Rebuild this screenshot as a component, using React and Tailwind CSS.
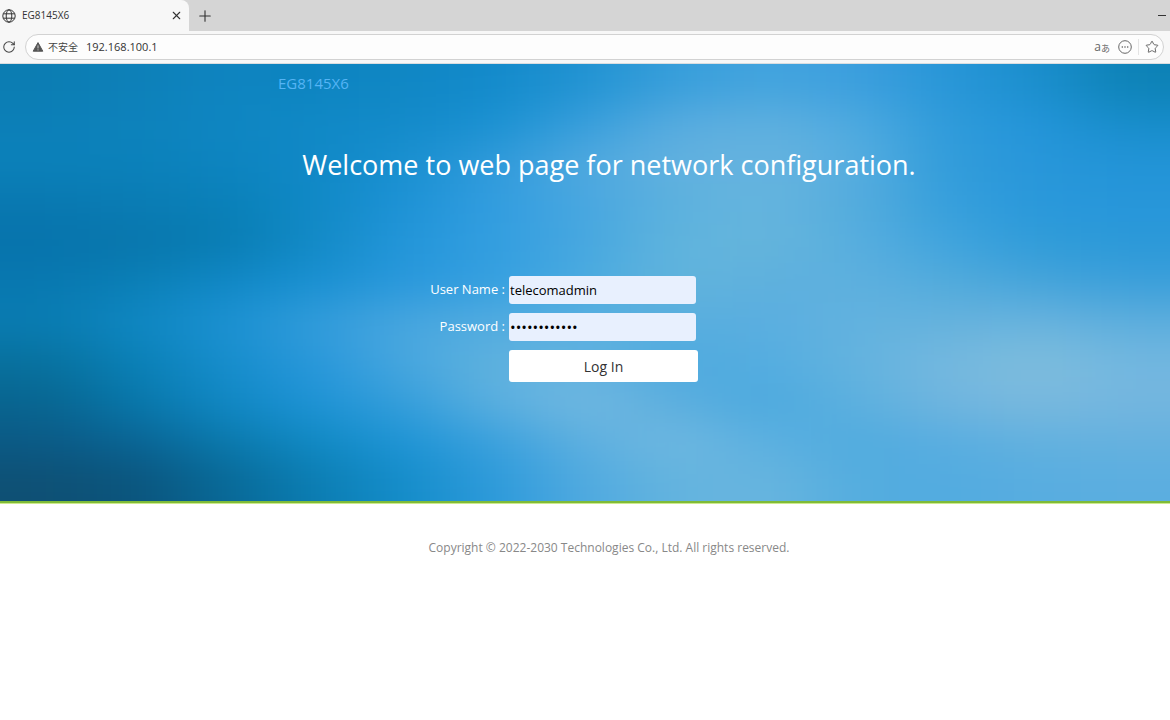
import React from "react";
import { Plus, RotateCw, Star, X } from "lucide-react";

// Colour field of the banner, one row per horizontal band
const BANNER = [
  ["#0c7db2", "#0d80b8", "#0e84c0", "#0d84c0", "#1087c4", "#138acb", "#2193d2", "#379edb", "#43a4de", "#3c9fde", "#2896d8", "#1b8fce", "#0d82b6"],
  ["#0c7fb8", "#0d82bc", "#0e86c2", "#1089c6", "#138aca", "#1a91d2", "#379edc", "#58ace0", "#60b0df", "#4eaae0", "#2f9bda", "#2395da", "#178dcb"],
  ["#0b81ba", "#0b81ba", "#0d84c0", "#1088c6", "#1990d0", "#309adb", "#50a9df", "#62b1df", "#66b3df", "#58aee0", "#319cda", "#2896da", "#2294d7"],
  ["#0978b0", "#0a7cb4", "#0980b8", "#1089c6", "#1d92d6", "#329de0", "#48a7e0", "#5cb1de", "#66b5de", "#54acdd", "#369fdc", "#2998da", "#2796da"],
  ["#0773ac", "#0876ac", "#087cb2", "#128ac6", "#2396da", "#339ee0", "#46a7e0", "#60b4dd", "#65b5dc", "#58aede", "#40a4dd", "#309cd9", "#2b99d9"],
  ["#0878b0", "#0a7fb6", "#1088c6", "#1990d2", "#2998dc", "#349fe0", "#4aabe0", "#62b4dc", "#5eb0dd", "#5eb0df", "#52abdc", "#46a4da", "#3b9fda"],
  ["#097cb2", "#0f87c2", "#1b91d2", "#329cdb", "#48a6df", "#52ace0", "#5aafe0", "#58aede", "#5aaee0", "#62b2df", "#65b2dd", "#69b3de", "#5daedd"],
  ["#08719e", "#0980b6", "#168dcc", "#2897db", "#48a7df", "#60b2de", "#62b2e0", "#4eaade", "#54ade0", "#63b3df", "#74b8df", "#7fbedc", "#72b7e0"],
  ["#086590", "#0877aa", "#1088c4", "#1e93d6", "#359edb", "#5cb0e0", "#72b8e0", "#5baedf", "#4ba9df", "#5cb0df", "#70b5df", "#7ab9de", "#74b6df"],
  ["#0b5a86", "#0a6494", "#0a79ac", "#108ac4", "#1e94d6", "#3aa0dd", "#5eb0e0", "#70b8e0", "#5bb0e0", "#50abdf", "#58ade0", "#62b1df", "#65b1df"],
  ["#0e5074", "#0b547c", "#086896", "#0b7db2", "#148dca", "#2d9adb", "#50aae0", "#64b4df", "#68b5df", "#54addf", "#52abe0", "#58ade0", "#5baee0"],
];

const CELL_W = 90;
const CELL_H = 40;

function BannerArt() {
  const lastCol = BANNER[0].length - 1;
  const lastRow = BANNER.length - 1;

  return (
    <svg
      className="absolute inset-0 h-full w-full"
      viewBox="0 0 1170 440"
      preserveAspectRatio="none"
      aria-hidden="true"
    >
      <defs>
        <filter id="soften" filterUnits="userSpaceOnUse" x="-200" y="-200" width="1570" height="840" colorInterpolationFilters="sRGB">
          <feGaussianBlur stdDeviation="40 20" />
        </filter>
      </defs>
      <g filter="url(#soften)" shapeRendering="crispEdges">
        {BANNER.map((row, r) =>
          row.map((fill, c) => {
            // edge cells run past the frame so the blur doesn't fade out there
            const left = c === 0 ? 200 : 0;
            const right = c === lastCol ? 200 : 0;
            const top = r === 0 ? 200 : 0;
            const bottom = r === lastRow ? 200 : 0;
            return (
              <rect
                key={`${r}-${c}`}
                x={c * CELL_W - left}
                y={r * CELL_H - top}
                width={CELL_W + left + right}
                height={CELL_H + top + bottom}
                fill={fill}
              />
            );
          })
        )}
      </g>
    </svg>
  );
}

function GlobeIcon() {
  return (
    <svg width="14" height="14" viewBox="0 0 14 14" fill="none" stroke="currentColor" aria-hidden="true">
      <circle cx="7" cy="7" r="6.2" />
      <ellipse cx="7" cy="7" rx="2.8" ry="6.2" />
      <path d="M1.3 4.8h11.4M1.3 9.2h11.4" />
    </svg>
  );
}

function TabStrip() {
  return (
    <div className="flex h-[31px] items-stretch bg-[#d5d5d5] text-[#333]">
      <div className="flex w-[189px] items-center rounded-tr-lg bg-[#f7f7f7] pl-0.5 pr-1">
        <GlobeIcon />
        <span className="ml-1.5 flex-1 text-[10px]">EG8145X6</span>
        <button type="button" aria-label="Close tab" className="p-0.5">
          <X size={13} strokeWidth={2} />
        </button>
      </div>
      <button type="button" aria-label="New tab" className="px-[7px]">
        <Plus size={18} strokeWidth={1.5} />
      </button>
      <button type="button" aria-label="Minimize" className="ml-auto flex items-center px-1">
        <span className="h-px w-2 bg-[#333]" />
      </button>
    </div>
  );
}

function AddressBar() {
  return (
    <div className="flex h-[33px] items-center border-b border-[#d9dde0] bg-[#f7f7f7] pr-1.5 text-[#444]">
      <button type="button" aria-label="Reload" className="w-[25px] pl-0.5">
        <RotateCw size={14} strokeWidth={1.75} />
      </button>
      <div className="flex h-[26px] flex-1 items-center rounded-full border border-[#d2d2d2] bg-[#fdfdfd] pl-1.5 pr-1">
        <svg width="12" height="12" viewBox="0 0 12 12" aria-hidden="true">
          <path d="M6 1.6 10.8 10.2H1.2Z" fill="#555" stroke="#555" strokeLinejoin="round" />
          <path d="M6 4.4v3M6 8.4v1" stroke="#ddd" strokeWidth="0.9" />
        </svg>
        <label htmlFor="url" className="ml-1 text-[10px]">
          不安全
        </label>
        <input id="url" type="text" defaultValue="192.168.100.1" className="ml-2 min-w-0 flex-1 bg-transparent text-[11px] text-[#333] outline-none" />
        <button type="button" aria-label="Translate" className="flex items-end text-[#666]">
          <span className="text-[12px] leading-4">a</span>
          <span className="text-[9px] leading-3">あ</span>
        </button>
        <button type="button" aria-label="More" className="ml-2">
          <svg width="14" height="14" viewBox="0 0 14 14" fill="none" aria-hidden="true">
            <circle cx="7" cy="7" r="6.3" stroke="#666" />
            <path d="M3.7 7h1.2M6.4 7h1.2M9.1 7h1.2" stroke="#666" strokeWidth="1.3" />
          </svg>
        </button>
        <span className="ml-1.5 h-4 w-px bg-[#e4e4e4]" />
        <button type="button" aria-label="Favorites" className="ml-1.5">
          <Star size={14} strokeWidth={1.5} className="text-[#555]" />
        </button>
      </div>
    </div>
  );
}

function LoginForm() {
  return (
    <form
      className="grid grid-cols-[227px_189px] items-center gap-x-1 gap-y-[9px] text-[13px]"
      onSubmit={(e) => e.preventDefault()}
    >
      <label htmlFor="username" className="text-right text-white">
        User Name :
      </label>
      <input
        id="username"
        type="text"
        defaultValue="telecomadmin"
        className="mr-0.5 h-7 rounded-[3px] bg-[#e8f0fe] pl-px text-black outline-none"
      />
      <label htmlFor="password" className="text-right text-white">
        Password :
      </label>
      <input
        id="password"
        type="password"
        defaultValue="adminpasswd1"
        className="mr-0.5 h-7 rounded-[3px] bg-[#e8f0fe] pl-px text-[15px] text-black outline-none"
      />
      <button type="submit" className="col-start-2 h-8 rounded-[3px] bg-white text-[14px] text-[#333]">
        Log In
      </button>
    </form>
  );
}

export default function App() {
  return (
    <div className="min-h-screen bg-white font-['Open_Sans','Noto_Sans_CJK_SC',sans-serif]">
      <header>
        <TabStrip />
        <AddressBar />
      </header>
      <main className="relative border-b-2 border-[#7fbb38] pb-[119px] pl-12">
        <BannerArt />
        <div className="relative mx-auto max-w-[662px]">
          <p className="pt-2 text-[15px] leading-[22px] text-[#55b4f5]">EG8145X6</p>
          <h1 className="mt-[51px] mb-[91px] text-center text-[27px] leading-10 whitespace-nowrap text-white">
            Welcome to web page for network configuration.
          </h1>
          <LoginForm />
        </div>
      </main>
      <footer className="border-t border-[#cdea8c] pt-9 pl-12 text-center text-[12px] leading-4 text-[#888]">
        Copyright © 2022-2030 Technologies Co., Ltd. All rights reserved.
      </footer>
    </div>
  );
}
